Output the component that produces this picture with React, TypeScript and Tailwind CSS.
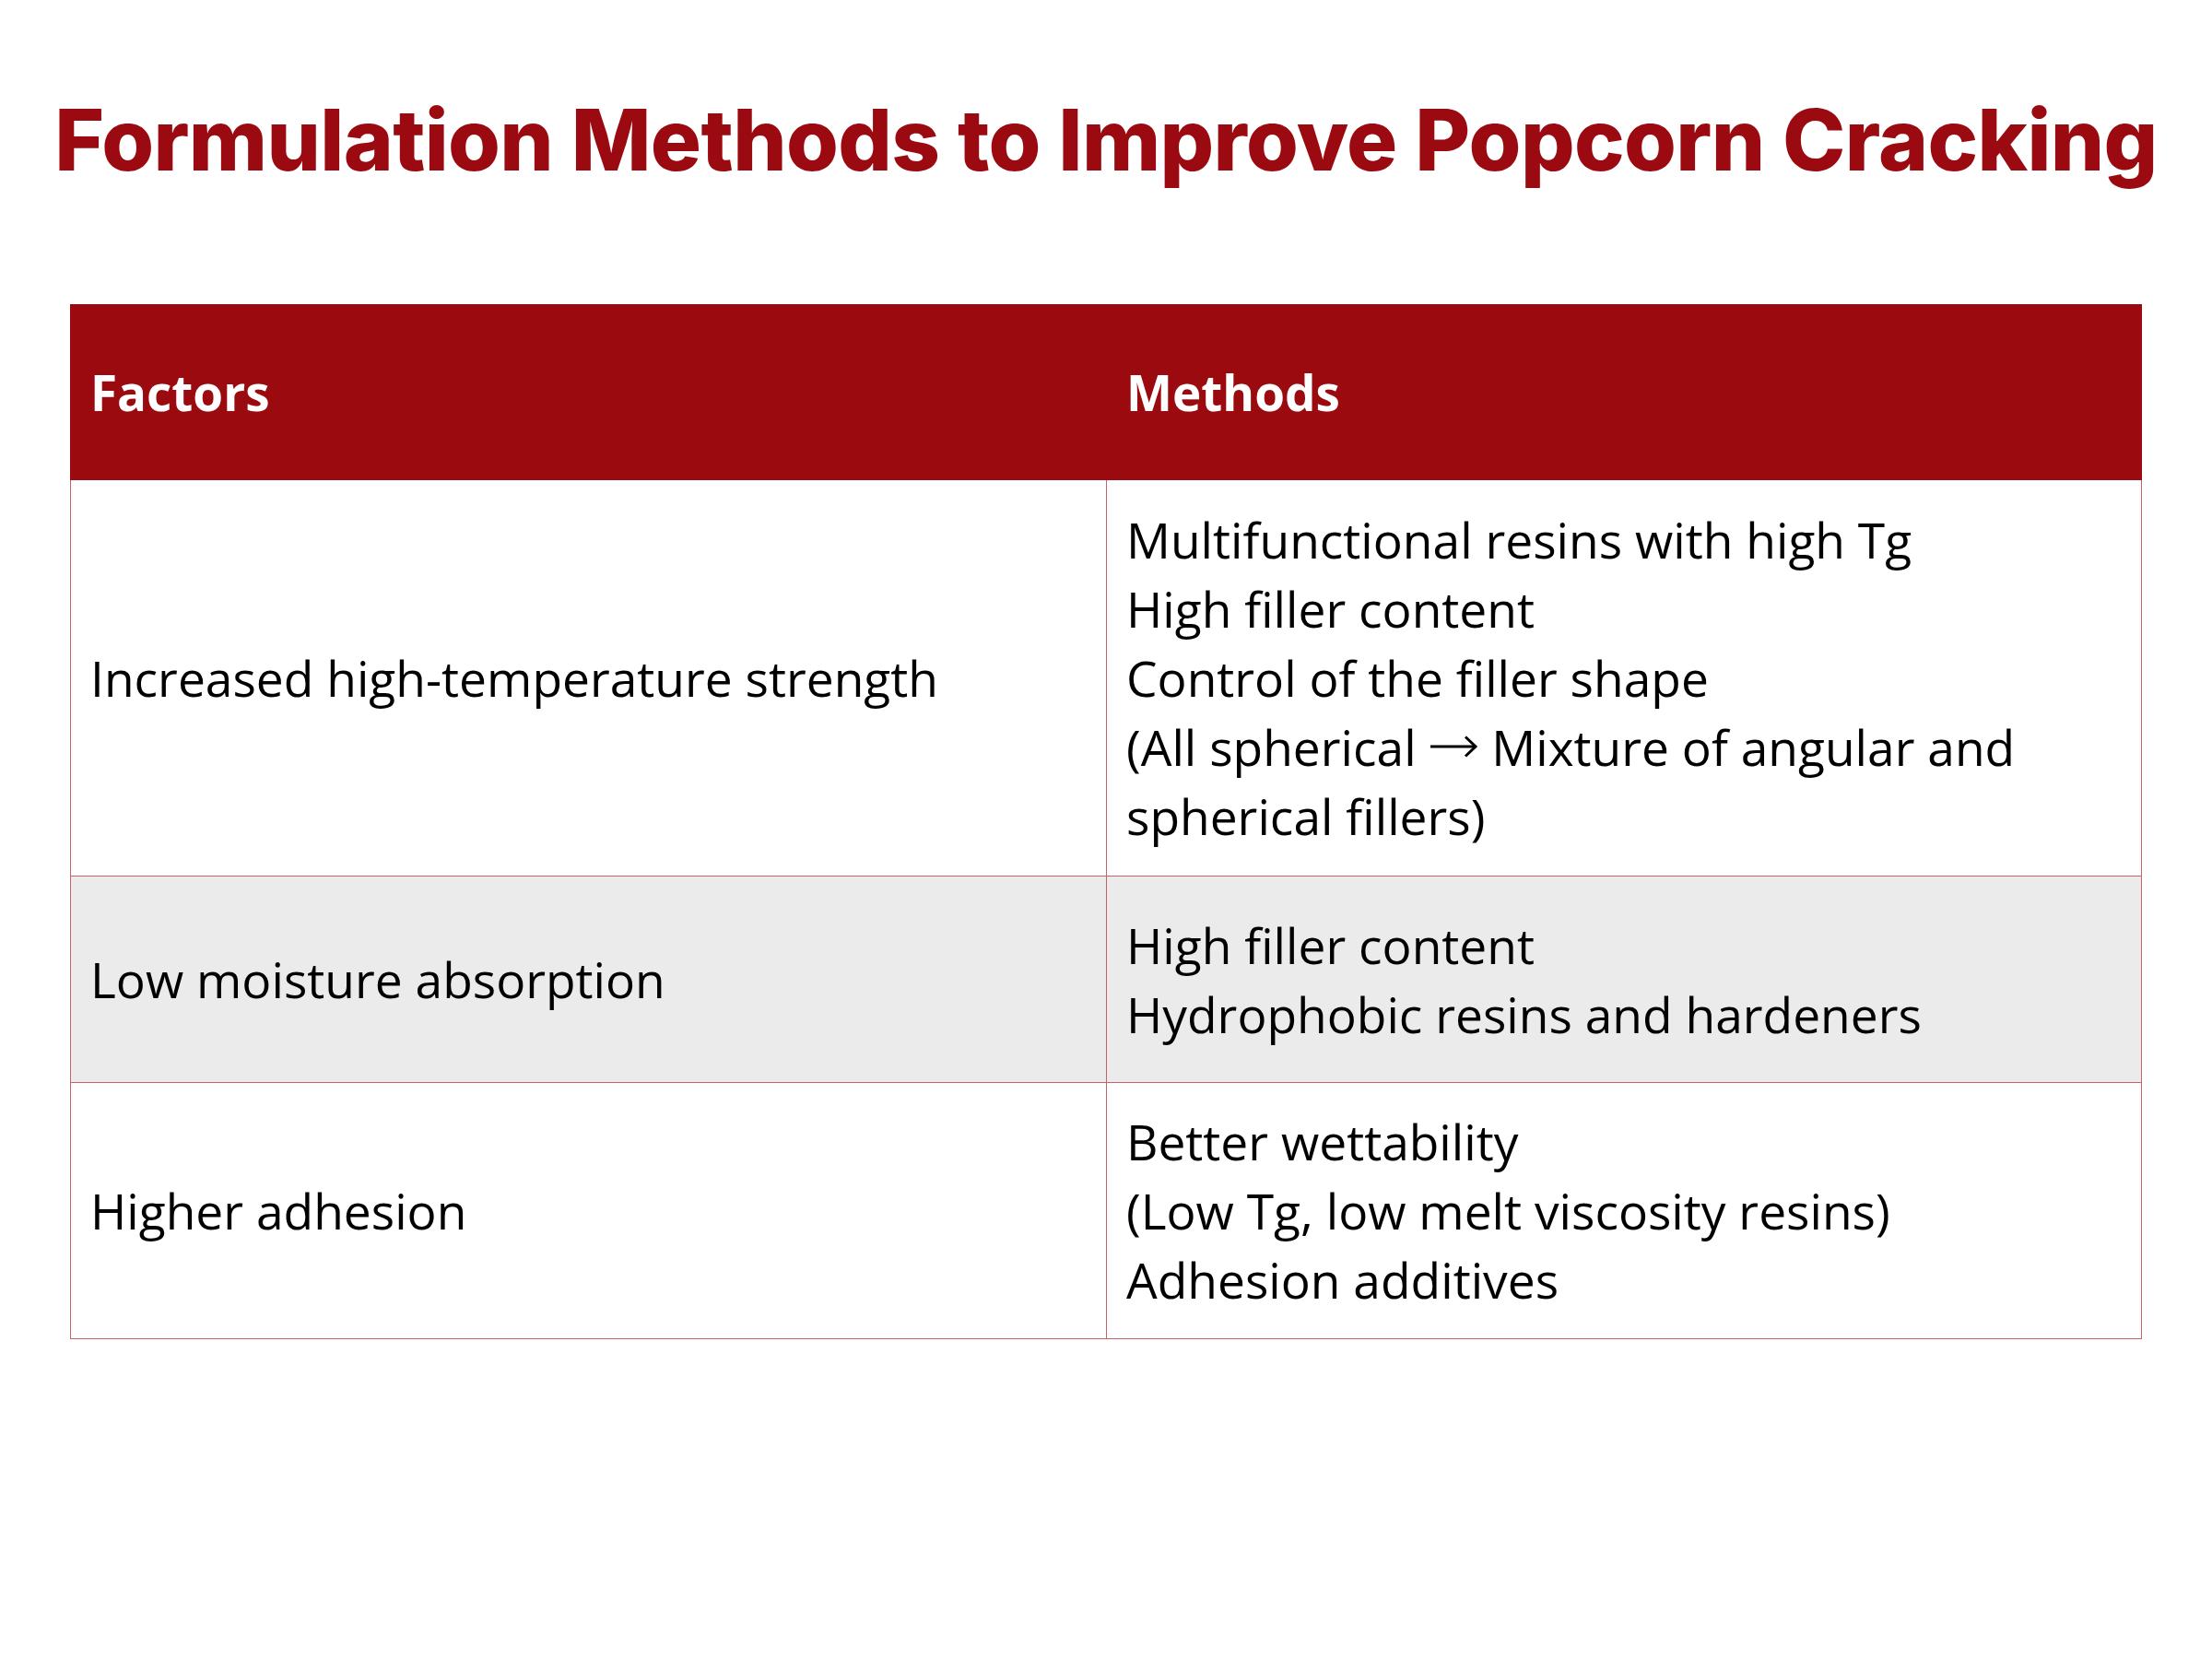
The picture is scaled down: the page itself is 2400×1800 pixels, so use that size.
const rows = [
  {
    factor: "Increased high-temperature strength",
    methods: [
      "Multifunctional resins with high Tg",
      "High filler content",
      "Control of the filler shape",
      "ARROW",
      "spherical fillers)",
    ],
    height: "h-[429px]",
    shade: false,
  },
  {
    factor: "Low moisture absorption",
    methods: ["High filler content", "Hydrophobic resins and hardeners"],
    height: "h-[224px]",
    shade: true,
  },
  {
    factor: "Higher adhesion",
    methods: [
      "Better wettability",
      "(Low Tg, low melt viscosity resins)",
      "Adhesion additives",
    ],
    height: "h-[278px]",
    shade: false,
  },
];

function Arrow() {
  return (
    <svg
      width="54"
      height="24"
      viewBox="0 0 54 24"
      className="inline-block align-[9px]"
      fill="none"
      stroke="currentColor"
      strokeWidth="3"
    >
      <path d="M2 12H51" />
      <path d="M40 1.5L51 12L40 22.5" />
    </svg>
  );
}

export default function App() {
  return (
    <div className="h-[1800px] w-[2400px] bg-white font-['Open_Sans',sans-serif] text-black">
      <h1 className="pt-[106px] text-center font-['Inter',sans-serif] text-[92px] font-extrabold leading-none tracking-[-0.65px] text-[#9b0a10]">
        Formulation Methods to Improve Popcorn Cracking
      </h1>

      <div className="mx-[76px] mt-[132px] w-[2248px]">
        <div className="grid h-[191px] grid-cols-2 bg-[#9a0a0f] text-white">
          <div className="flex items-center px-[22px] text-[53px] font-bold leading-[75px]">Factors</div>
          <div className="flex items-center px-[22px] text-[53px] font-bold leading-[75px]">Methods</div>
        </div>

        <div className="border-x border-b border-[#c4636a]">
          {rows.map((row, i) => (
            <div
              key={row.factor}
              className={`grid grid-cols-2 ${row.height} ${row.shade ? "bg-[#ebebeb]" : "bg-white"} ${
                i > 0 ? "border-t border-[#c4636a]" : ""
              }`}
            >
              <div className="flex items-center px-[21px] text-[53.3px] leading-[75px]">{row.factor}</div>
              <div className="flex flex-col justify-center border-l border-[#c4636a] px-[21px] text-[53.3px] leading-[75px]">
                {row.methods.map((m) =>
                  m === "ARROW" ? (
                    <span key={m}>
                      (All spherical <Arrow /> Mixture of angular and
                    </span>
                  ) : (
                    <span key={m}>{m}</span>
                  )
                )}
              </div>
            </div>
          ))}
        </div>
      </div>
    </div>
  );
}
